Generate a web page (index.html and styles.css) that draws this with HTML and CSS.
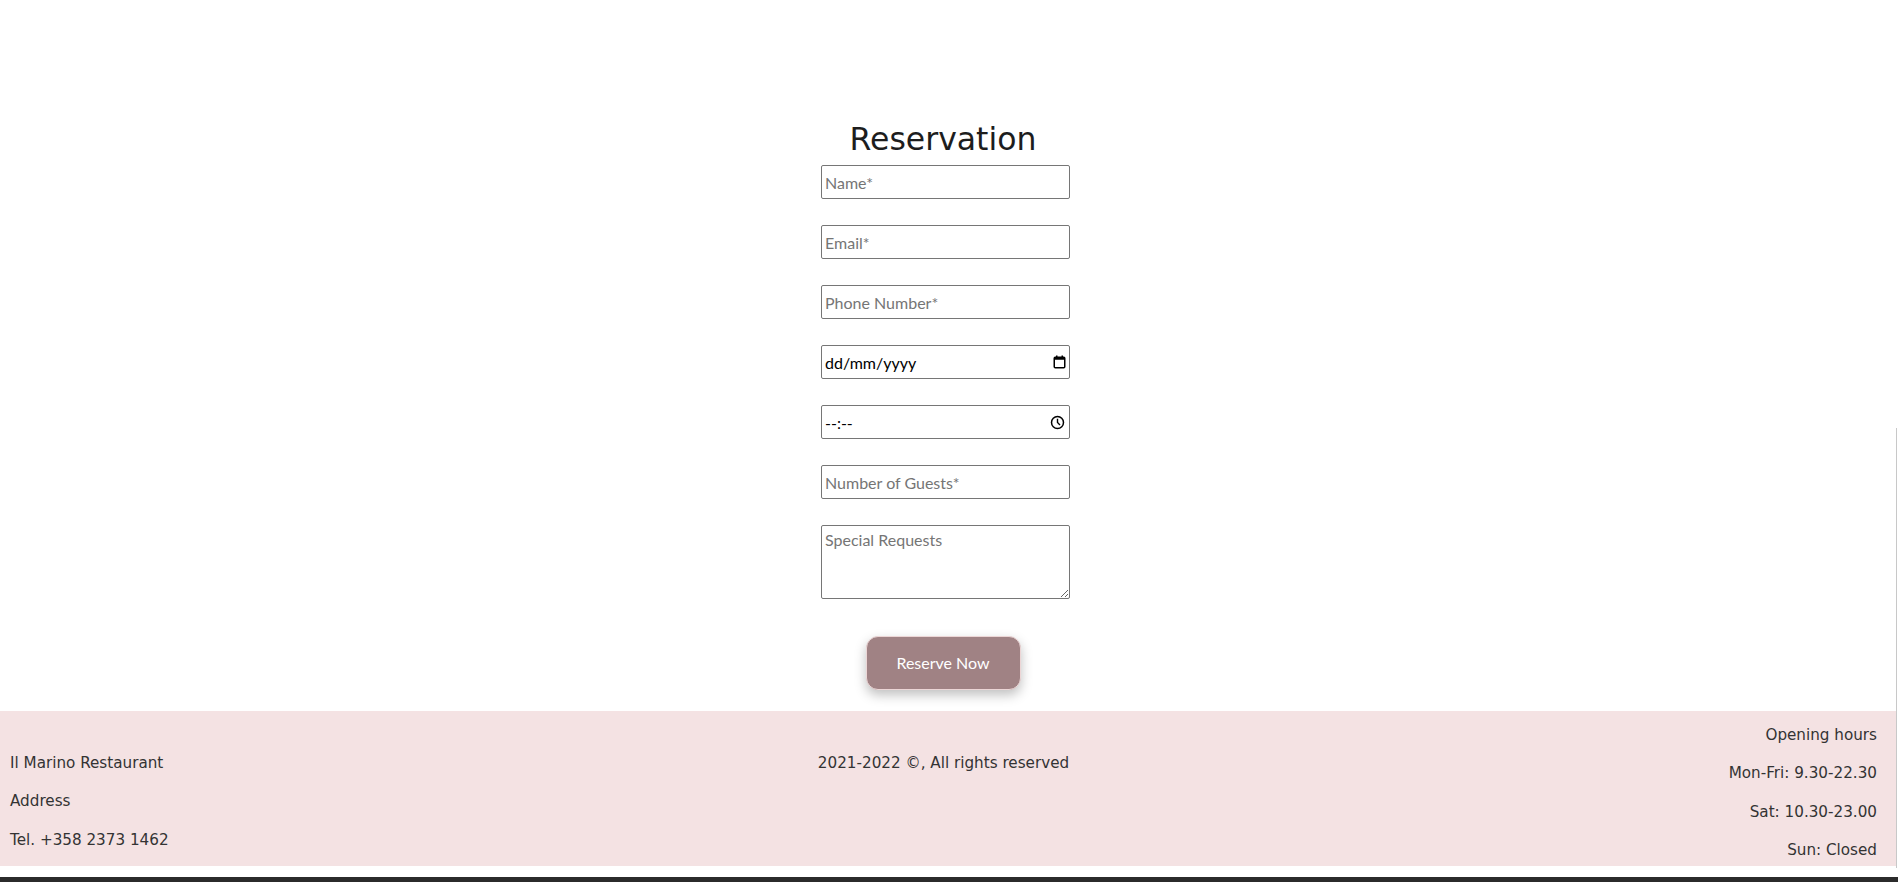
FILE: index.html
```html
<!DOCTYPE html>
<html lang="en">
<head>
<meta charset="utf-8">
<title>Reservation - Il Marino Restaurant</title>
<link rel="stylesheet" href="styles.css">
</head>
<body>
<main class="reservation">
  <h1 class="title">Reservation</h1>
  <form class="form">
    <input class="field" type="text" placeholder="Name*">
    <input class="field" type="email" placeholder="Email*">
    <input class="field" type="tel" placeholder="Phone Number*">
    <div class="field-wrap">
      <input class="field field-dark" type="text" placeholder="dd/mm/yyyy">
      <svg class="field-icon icon-cal" width="13" height="14" viewBox="0 0 13 14">
        <rect x="1.25" y="2.25" width="10.5" height="10.5" rx="1" fill="none" stroke="#000" stroke-width="1.5"/>
        <rect x="1.25" y="2.25" width="10.5" height="2.5" fill="#000"/>
        <rect x="3" y="0.5" width="1.5" height="2.5" fill="#000"/>
        <rect x="8.5" y="0.5" width="1.5" height="2.5" fill="#000"/>
      </svg>
    </div>
    <div class="field-wrap">
      <input class="field field-dark" type="text" placeholder="--:--">
      <svg class="field-icon icon-clock" width="15" height="15" viewBox="0 0 15 15">
        <circle cx="7.5" cy="7.5" r="6" fill="none" stroke="#000" stroke-width="1.5"/>
        <path d="M7.5 3.8V7.5L10 10" fill="none" stroke="#000" stroke-width="1.4"/>
      </svg>
    </div>
    <input class="field" type="number" placeholder="Number of Guests*">
    <textarea class="field field-area" placeholder="Special Requests"></textarea>
    <button class="btn" type="button">Reserve Now</button>
  </form>
</main>
<footer class="footer">
  <div class="col col-left">
    <p>Il Marino Restaurant</p>
    <p>Address</p>
    <p>Tel. +358 2373 1462</p>
  </div>
  <div class="col col-center">
    <p>2021-2022 ©, All rights reserved</p>
  </div>
  <div class="col col-right">
    <p>Opening hours</p>
    <p>Mon-Fri: 9.30-22.30</p>
    <p>Sat: 10.30-23.00</p>
    <p>Sun: Closed</p>
  </div>
</footer>
<div class="taskbar"></div>
<div class="edge-line"></div>
</body>
</html>
```
FILE: styles.css
```css
html, body {
  margin: 0;
  padding: 0;
  background: #ffffff;
  height: 882px;
  overflow: hidden;
}

body {
  font-family: "DejaVu Sans", Verdana, sans-serif;
  color: #333333;
  position: relative;
}

.reservation {
  display: flex;
  flex-direction: column;
  align-items: center;
  padding: 121px 12px 0 0;
}

.title {
  margin: 0;
  font-family: "DejaVu Sans", Verdana, sans-serif;
  font-weight: normal;
  font-size: 31.5px;
  line-height: 37px;
  color: #1d1d1d;
}

.form {
  margin-top: 7px;
  display: flex;
  flex-direction: column;
  align-items: center;
  gap: 26px;
}

.field {
  box-sizing: border-box;
  width: 249px;
  height: 34px;
  margin: 0 0 0 5px;
  padding: 0 3px;
  border: 1px solid #767676;
  border-radius: 2px;
  font-family: "Lato", "Open Sans", sans-serif;
  font-size: 16px;
  color: #000;
  background: #fff;
  outline: none;
}

.field::placeholder {
  color: #757575;
}

.field-dark::placeholder {
  color: #000;
}

.field-wrap {
  position: relative;
  display: flex;
}

.field-icon {
  position: absolute;
  top: 10px;
  right: 4px;
}

.icon-clock {
  top: 10px;
  right: 5px;
}

.field-area {
  height: 74px;
  padding: 4px 3px;
  resize: vertical;
}

.btn {
  box-sizing: border-box;
  width: 155px;
  height: 54.5px;
  margin-top: 10.5px;
  border: 1px solid #ecd6d6;
  border-radius: 12px;
  background: #a08284;
  color: #ffffff;
  font-family: "Lato", "Open Sans", sans-serif;
  font-size: 16px;
  box-shadow: 0 5px 12px rgba(0, 0, 0, 0.25);
}

.footer {
  margin: 21px 2px 0 0;
  height: 155px;
  box-sizing: border-box;
  padding: 14px 19px 0 10px;
  background: #f4e2e3;
  display: grid;
  grid-template-columns: 1fr auto 1fr;
  align-items: start;
  font-size: 15.2px;
  color: #333333;
}

.col {
  display: flex;
  flex-direction: column;
  gap: 18.3px;
}

.col p {
  margin: 0;
  line-height: 20px;
}

.col-left {
  margin-top: 28px;
  justify-self: start;
}

.col-center {
  margin-top: 28px;
  justify-self: center;
}

.col-right {
  justify-self: end;
  text-align: right;
}

.taskbar {
  margin-top: 11px;
  height: 6px;
  background: #2b2b2b;
}

.edge-line {
  position: absolute;
  right: 1px;
  top: 428px;
  width: 1px;
  height: 440px;
  background: #c8c8c8;
}
```
